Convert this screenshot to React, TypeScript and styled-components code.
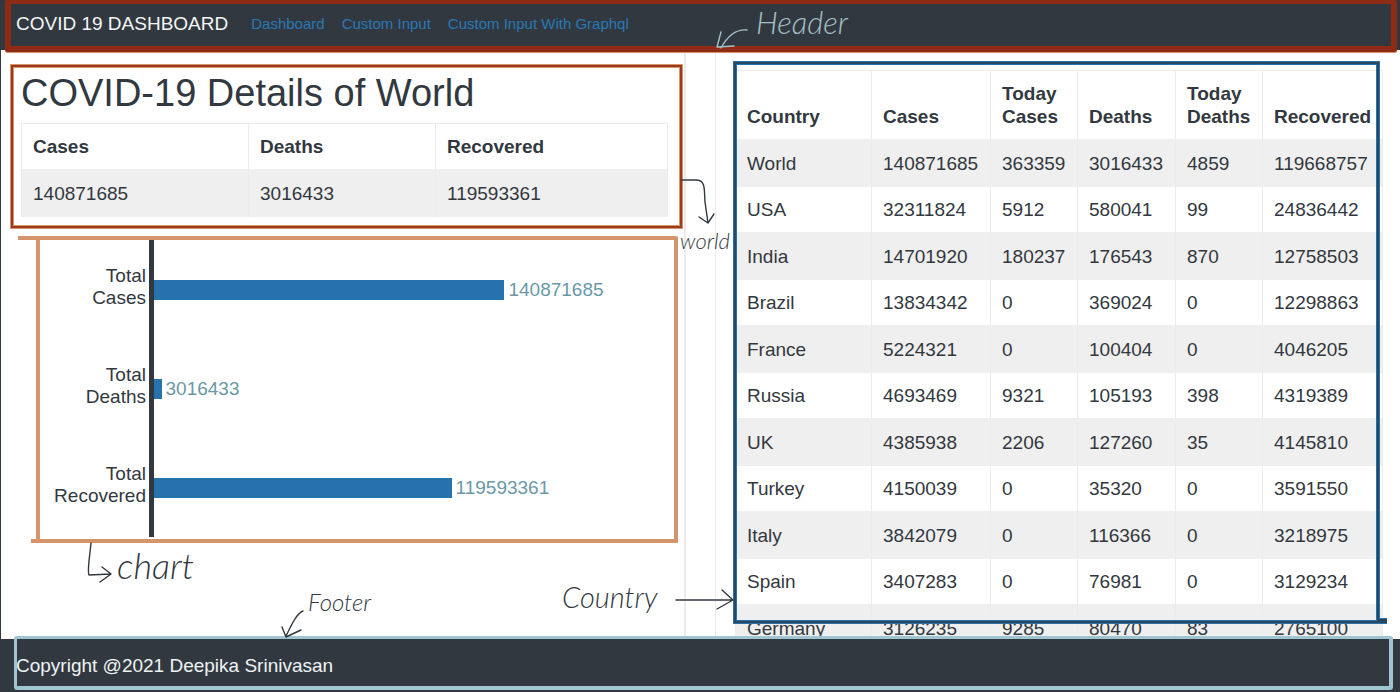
import React from "react";
import styled, { createGlobalStyle } from "styled-components";

const ink = "#323840";
const rust = "#8f2b14";
const sand = "#d4956d";
const sky = "#9fc6d0";
const blue = "#2672ad";
const line = "#ececec";

const GlobalStyle = createGlobalStyle`
  * { box-sizing: border-box; }
  body {
    margin: 0;
    background: #fff;
    color: ${ink};
    font: 19px/23px "Liberation Sans", Arial, sans-serif;
  }
`;

const Page = styled.div`
  display: flex;
  flex-direction: column;
  height: 100vh;
  min-height: 600px;
  overflow: hidden;
`;

const Header = styled.header`
  position: relative;
  z-index: 2;
  display: flex;
  align-items: center;
  gap: 23px;
  flex: none;
  height: 50px;
  padding: 0 16px 4px;
  background: ${ink};

  &::after {
    content: "";
    position: absolute;
    inset: 0 3px -2px 5px;
    border: 6px solid ${rust};
    border-top-width: 4px;
    border-radius: 2px;
    box-shadow: 0 1px 0 ${sand};
    pointer-events: none;
  }
`;

const Brand = styled.span`
  color: #f2f6f7;
  font-size: 19px;
  white-space: nowrap;
`;

const Nav = styled.nav`
  display: flex;
  gap: 17px;
`;

const NavLink = styled.a`
  color: #2878b4;
  font-size: 15px;
  text-decoration: none;
  white-space: nowrap;
`;

const Main = styled.main`
  display: grid;
  grid-template-columns: minmax(0, 1fr) 32px minmax(0, 1fr);
  grid-template-rows: minmax(0, 1fr);
  flex: 1;
  min-height: 0;
`;

const LeftPanel = styled.div`
  min-width: 0;
  padding-top: 14px;
  border-left: 1px solid ${ink};
`;

const Gutter = styled.div`
  border: solid ${line};
  border-width: 0 1px 0 2px;
`;

const RightPanel = styled.section`
  position: relative;
  min-width: 0;
  padding: 20px 17px 0 19px;
`;

const ScrollArea = styled.div`
  height: 100%;
  overflow: hidden;
`;

const WorldSection = styled.section`
  position: relative;
  margin: 0 1px 0 9px;
  padding: 0 15px 11px 10px;
  border: 1px solid ${sand};
  box-shadow: inset 0 0 0 2px #9c3a1c, inset 0 0 0 3px ${sand};
`;

const Title = styled.h1`
  margin: 0;
  padding-bottom: 2px;
  font-size: 38px;
  line-height: 56px;
  font-weight: 400;
  white-space: nowrap;
`;

const Table = styled.table`
  width: 100%;
  table-layout: fixed;
  border-collapse: separate;
  border-spacing: 0;
  border: solid ${line};
  border-width: 1px 1px 0 0;
`;

const HeadCell = styled.th<{ $width: number; $height: number }>`
  width: ${(p) => p.$width}px;
  height: ${(p) => p.$height}px;
  padding: 0 0 11px 11px;
  border-left: 1px solid ${line};
  text-align: left;
  vertical-align: bottom;
  font-weight: 700;
`;

const Row = styled.tr`
  height: 45px;

  &:nth-child(odd) {
    height: 48px;
    background: #efefef;
  }
`;

const Cell = styled.td`
  padding: 0 0 0 11px;
  border-left: 1px solid ${line};
`;

const CountryFrame = styled.div`
  position: absolute;
  inset: 11px 20px 15px 17px;
  border: 1px solid ${blue};
  box-shadow: inset 0 0 0 2px #29475f, inset 0 0 0 3px ${blue};
  pointer-events: none;

  &::after {
    content: "";
    position: absolute;
    right: -8px;
    bottom: -1px;
    width: 8px;
    height: 4px;
    border: solid ${blue};
    border-width: 1px 0;
    background: #29475f;
  }
`;

const ChartSection = styled.section`
  position: relative;
  margin: 7px 6px 0 35px;
  border: 4px solid ${sand};
  border-radius: 0 2px 0 0;

  &::before,
  &::after {
    content: "";
    position: absolute;
    height: 4px;
    background: ${sand};
  }
  &::before {
    top: -4px;
    left: -22px;
    width: 22px;
  }
  &::after {
    bottom: -4px;
    left: -9px;
    width: 9px;
  }
`;

const ChartRows = styled.div`
  padding-bottom: 2px;
`;

const ChartRow = styled.div`
  display: grid;
  grid-template-columns: 109px minmax(0, 1fr);
  height: 99px;
`;

const ChartLabel = styled.div`
  align-self: center;
  padding: 0 3px 6px 12px;
  line-height: 22px;
  text-align: right;
`;

const Track = styled.div`
  display: flex;
  align-items: center;
  gap: 4px;
  border-left: 5px solid ${ink};
`;

const Bar = styled.div`
  height: 20px;
  background: ${blue};
`;

const Value = styled.span`
  color: #6a98a7;
`;

const Footer = styled.footer`
  position: relative;
  z-index: 2;
  display: flex;
  align-items: center;
  flex: none;
  height: 53px;
  padding: 0 16px;
  background: ${ink};
  color: #eef4f5;

  &::after {
    content: "";
    position: absolute;
    inset: -3px 7px 2px 14px;
    border: 4px solid ${sky};
    border-top-width: 3px;
    border-left-width: 3px;
    border-radius: 3px;
    pointer-events: none;
  }
`;

const Note = styled.span<{ $x: number; $y: number; $size: number; $light?: boolean }>`
  position: absolute;
  z-index: 3;
  left: ${(p) => p.$x}px;
  top: ${(p) => p.$y}px;
  color: ${(p) => (p.$light ? "#a3c0c8" : ink)};
  font: italic 300 ${(p) => p.$size}px/32px Lato, "Liberation Sans", sans-serif;
  white-space: nowrap;
`;

const ArrowSvg = styled.svg<{ $x: number; $y: number; $light?: boolean }>`
  position: absolute;
  z-index: 3;
  left: ${(p) => p.$x}px;
  top: ${(p) => p.$y}px;
  fill: none;
  stroke: ${(p) => (p.$light ? "#a3c0c8" : ink)};
  stroke-width: 1.4;
  stroke-linecap: round;
  stroke-linejoin: round;
  overflow: visible;
`;

function Arrow(props: { x: number; y: number; w: number; h: number; d: string; light?: boolean }) {
  return (
    <ArrowSvg $x={props.x} $y={props.y} $light={props.light} width={props.w} height={props.h} aria-hidden="true">
      <path d={props.d} />
    </ArrowSvg>
  );
}

const world = { cases: 140871685, deaths: 3016433, recovered: 119593361 };

const chart = [
  { name: "Cases", value: world.cases },
  { name: "Deaths", value: world.deaths },
  { name: "Recovered", value: world.recovered },
];

const columns = [
  { label: "Country", width: 136 },
  { label: "Cases", width: 119 },
  { label: "Today Cases", width: 87 },
  { label: "Deaths", width: 98 },
  { label: "Today Deaths", width: 87 },
  { label: "Recovered", width: 120 },
];

const countries: (string | number)[][] = [
  ["World", 140871685, 363359, 3016433, 4859, 119668757],
  ["USA", 32311824, 5912, 580041, 99, 24836442],
  ["India", 14701920, 180237, 176543, 870, 12758503],
  ["Brazil", 13834342, 0, 369024, 0, 12298863],
  ["France", 5224321, 0, 100404, 0, 4046205],
  ["Russia", 4693469, 9321, 105193, 398, 4319389],
  ["UK", 4385938, 2206, 127260, 35, 4145810],
  ["Turkey", 4150039, 0, 35320, 0, 3591550],
  ["Italy", 3842079, 0, 116366, 0, 3218975],
  ["Spain", 3407283, 0, 76981, 0, 3129234],
  ["Germany", 3126235, 9285, 80470, 83, 2765100],
];

export default function App() {
  return (
    <Page>
      <GlobalStyle />
      <Header>
        <Brand>COVID 19 DASHBOARD</Brand>
        <Nav>
          <NavLink href="#dashboard">Dashboard</NavLink>
          <NavLink href="#custom">Custom Input</NavLink>
          <NavLink href="#graphql">Custom Input With Graphql</NavLink>
        </Nav>
        <Arrow x={716} y={29} w={34} h={22} light d="M31 1C20 0 12 6 5 19M5 3L1 18L18 17" />
        <Note $x={756} $y={6} $size={31} $light>Header</Note>
      </Header>
      <Main>
        <LeftPanel>
          <WorldSection>
            <Title>COVID-19 Details of World</Title>
            <Table>
              <thead>
                <tr>
                  <HeadCell $width={227} $height={45}>Cases</HeadCell>
                  <HeadCell $width={187} $height={45}>Deaths</HeadCell>
                  <HeadCell $width={232} $height={45}>Recovered</HeadCell>
                </tr>
              </thead>
              <tbody>
                <Row>
                  <Cell>{world.cases}</Cell>
                  <Cell>{world.deaths}</Cell>
                  <Cell>{world.recovered}</Cell>
                </Row>
              </tbody>
            </Table>
            <Arrow x={671} y={115} w={34} h={46} d="M0 0H15C24 1 22 10 23 22L26 43M17 37L26 43L32 34" />
            <Note $x={669} $y={160} $size={22}>world</Note>
          </WorldSection>
          <ChartSection>
            <ChartRows>
              {chart.map((c) => (
                <ChartRow key={c.name}>
                  <ChartLabel>Total {c.name}</ChartLabel>
                  <Track>
                    <Bar style={{ width: `${(c.value / world.cases) * 67.4}%` }} />
                    <Value>{c.value}</Value>
                  </Track>
                </ChartRow>
              ))}
            </ChartRows>
            <Arrow x={48} y={303} w={26} h={40} d="M3 0C2 12-1 28 1 32L23 31M14 24L23 31L12 39" />
            <Note $x={77} $y={309} $size={36}>chart</Note>
          </ChartSection>
        </LeftPanel>
        <Gutter />
        <RightPanel>
          <ScrollArea>
            <Table>
              <thead>
                <tr>
                  {columns.map((c) => (
                    <HeadCell key={c.label} $width={c.width} $height={68}>{c.label}</HeadCell>
                  ))}
                </tr>
              </thead>
              <tbody>
                {countries.map((r) => (
                  <Row key={r[0]}>
                    {r.map((v, i) => (
                      <Cell key={i}>{v}</Cell>
                    ))}
                  </Row>
                ))}
              </tbody>
            </Table>
          </ScrollArea>
          <CountryFrame />
          <Note $x={-154} $y={531} $size={29}>Country</Note>
          <Arrow x={-40} y={540} w={58} h={20} d="M0 10H57M46 0L57 10L41 19" />
        </RightPanel>
      </Main>
      <Footer>
        Copyright @2021 Deepika Srinivasan
        <Note $x={308} $y={-53} $size={24}>Footer</Note>
        <Arrow x={282} y={-28} w={22} h={26} d="M21 0C14 3 9 15 4 25M0 16L4 26L19 19" />
      </Footer>
    </Page>
  );
}
